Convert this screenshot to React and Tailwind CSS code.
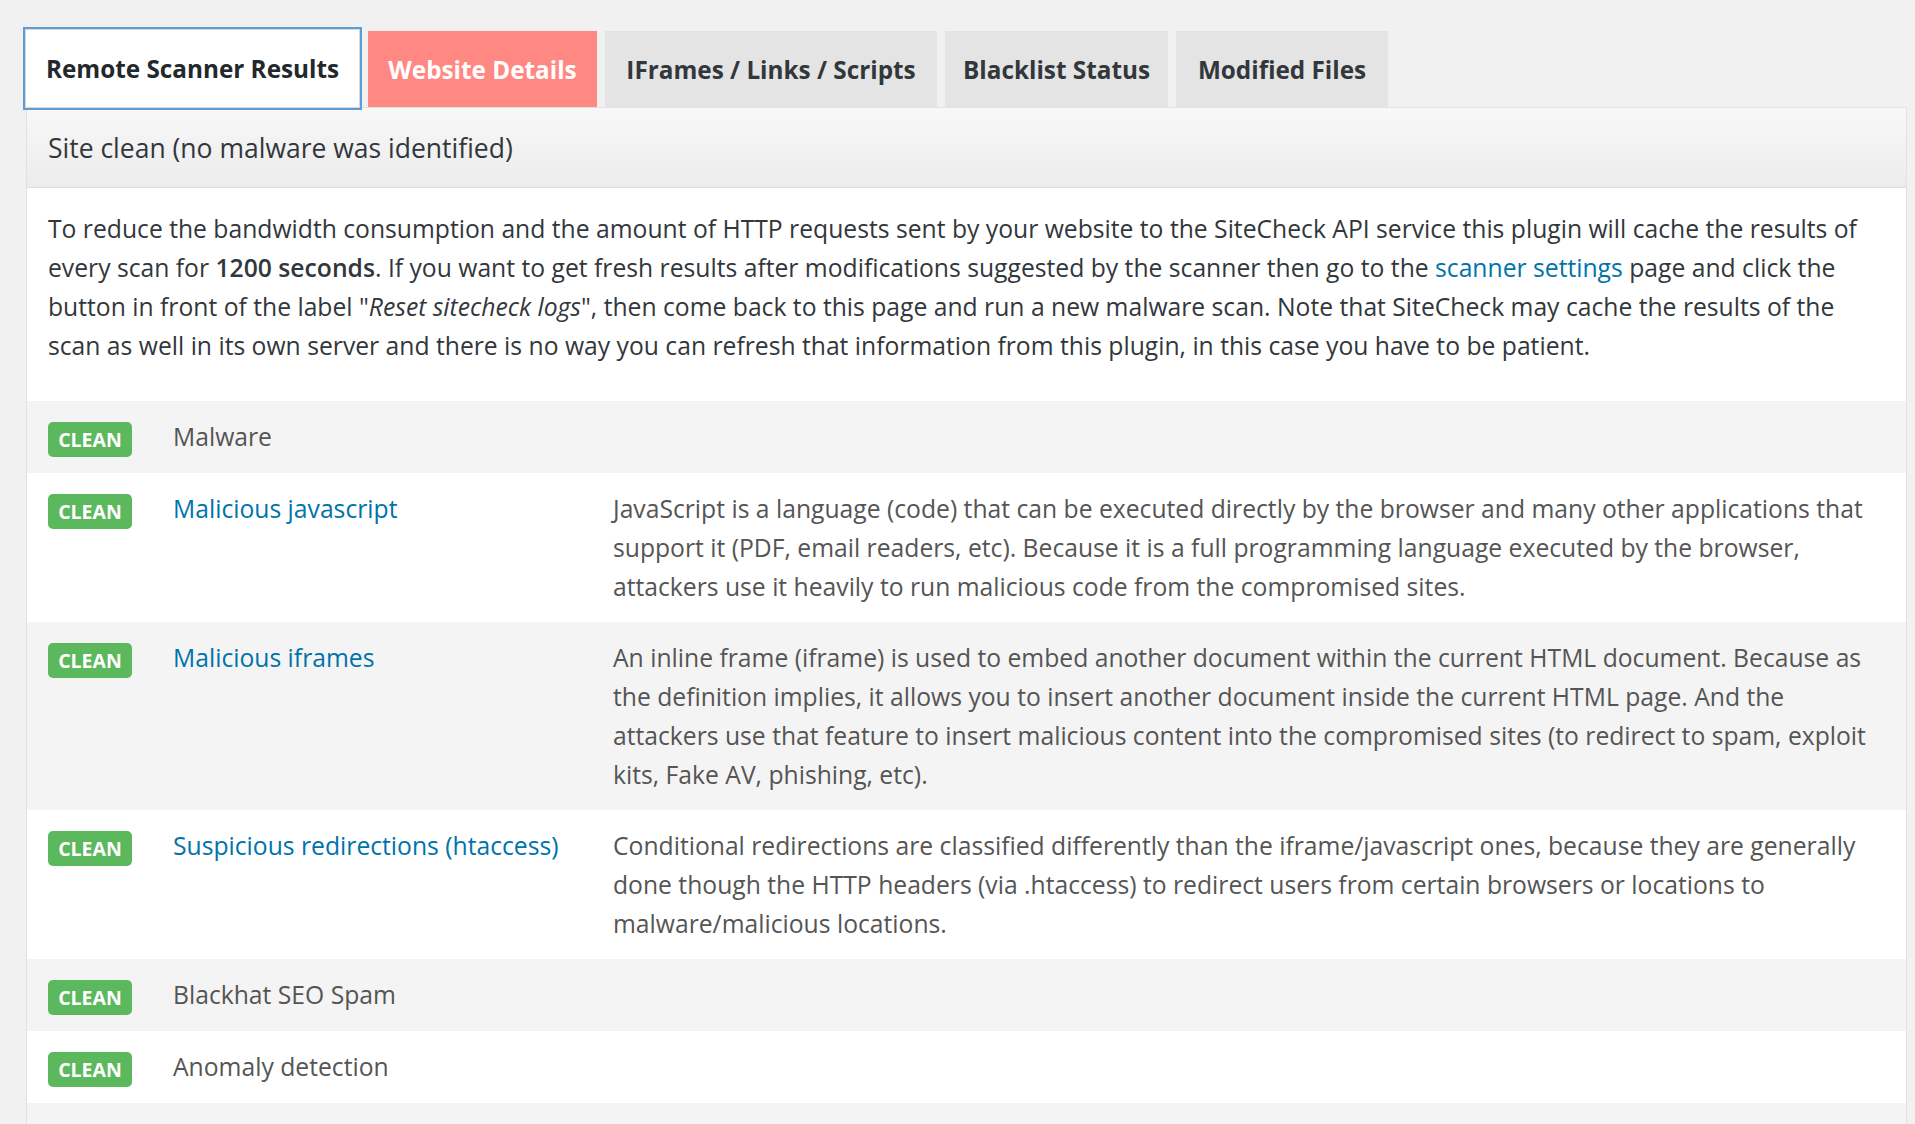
import React from "react";

const font = "font-['Open_Sans','Noto_Sans',sans-serif]";

function Badge() {
  return (
    <span className="mt-[5px] inline-flex h-[35px] w-[84px] items-center justify-center rounded-[5px] bg-[#5cb85c] text-[19.5px] font-bold leading-none text-white">
      CLEAN
    </span>
  );
}

const rows = [
  { name: "Malware", link: false, desc: [] },
  {
    name: "Malicious javascript",
    link: true,
    desc: [
      "JavaScript is a language (code) that can be executed directly by the browser and many other applications that",
      "support it (PDF, email readers, etc). Because it is a full programming language executed by the browser,",
      "attackers use it heavily to run malicious code from the compromised sites.",
    ],
  },
  {
    name: "Malicious iframes",
    link: true,
    desc: [
      "An inline frame (iframe) is used to embed another document within the current HTML document. Because as",
      "the definition implies, it allows you to insert another document inside the current HTML page. And the",
      "attackers use that feature to insert malicious content into the compromised sites (to redirect to spam, exploit",
      "kits, Fake AV, phishing, etc).",
    ],
  },
  {
    name: "Suspicious redirections (htaccess)",
    link: true,
    desc: [
      "Conditional redirections are classified differently than the iframe/javascript ones, because they are generally",
      "done though the HTTP headers (via .htaccess) to redirect users from certain browsers or locations to",
      "malware/malicious locations.",
    ],
  },
  { name: "Blackhat SEO Spam", link: false, desc: [] },
  { name: "Anomaly detection", link: false, desc: [] },
];

export default function App() {
  return (
    <div className={`min-h-screen bg-[#f1f1f1] ${font} text-[#32373c]`}>
      {/* Tabs */}
      <div className="flex h-[107px] items-end gap-[8px] pl-[25px]">
        <div className="relative z-10 mb-[-1px] flex h-[79px] w-[335px] items-center justify-center border border-[#d8d8d8] bg-white pt-[2px] text-[24.3px] font-bold text-[#23282d] shadow-[0_0_0_2px_#5b9dd9]">
          Remote Scanner Results
        </div>
        <div className="flex h-[76px] w-[229px] items-center justify-center bg-[#ff8882] pt-[2px] text-[24.3px] font-bold text-white">
          Website Details
        </div>
        <div className="flex h-[76px] w-[332px] items-center justify-center bg-[#e4e4e4] pt-[2px] text-[24.3px] font-bold text-[#32373c]">
          IFrames / Links / Scripts
        </div>
        <div className="flex h-[76px] w-[223px] items-center justify-center bg-[#e4e4e4] pt-[2px] text-[24.3px] font-bold text-[#32373c]">
          Blacklist Status
        </div>
        <div className="flex h-[76px] w-[212px] items-center justify-center bg-[#e4e4e4] pt-[2px] text-[24.3px] font-bold text-[#32373c]">
          Modified Files
        </div>
      </div>

      {/* Panel */}
      <div className="ml-[26px] w-[1881px] border border-[#e2e2e2] bg-white">
        <div className="border-b border-[#dedede] bg-gradient-to-b from-[#f8f8f8] to-[#ececec] px-[21px] pb-[19px] pt-[21px] text-[26.5px] leading-[39px] text-[#32373c]">
          Site clean (no malware was identified)
        </div>

        <div className="whitespace-nowrap px-[21px] pb-[36px] pt-[21px] text-[24.7px] leading-[39px] text-[#32373c]">
          To reduce the bandwidth consumption and the amount of HTTP requests sent by your website to the SiteCheck API service this plugin will cache the results of
          <br />
          every scan for <strong className="font-semibold">1200 seconds</strong>. If you want to get fresh results after modifications suggested by the scanner then go to the{" "}
          <a className="text-[#0073aa]">scanner settings</a> page and click the
          <br />
          button in front of the label "<em>Reset sitecheck logs</em>", then come back to this page and run a new malware scan. Note that SiteCheck may cache the results of the
          <br />
          scan as well in its own server and there is no way you can refresh that information from this plugin, in this case you have to be patient.
        </div>

        {rows.map((r, i) => (
          <div
            key={r.name}
            className={`grid grid-cols-[125px_440px_1fr] py-[16px] pl-[21px] pr-[21px] text-[24.7px] leading-[39px] ${
              i % 2 === 0 ? "bg-[#f4f4f4]" : "bg-white"
            }`}
          >
            <div>
              <Badge />
            </div>
            <div className={r.link ? "text-[#0073aa]" : "text-[#555]"}>{r.name}</div>
            <div className="whitespace-nowrap text-[#555]">
              {r.desc.map((l, j) => (
                <div key={j}>{l}</div>
              ))}
            </div>
          </div>
        ))}
        <div className="h-[60px] bg-[#f4f4f4]" />
      </div>
    </div>
  );
}
